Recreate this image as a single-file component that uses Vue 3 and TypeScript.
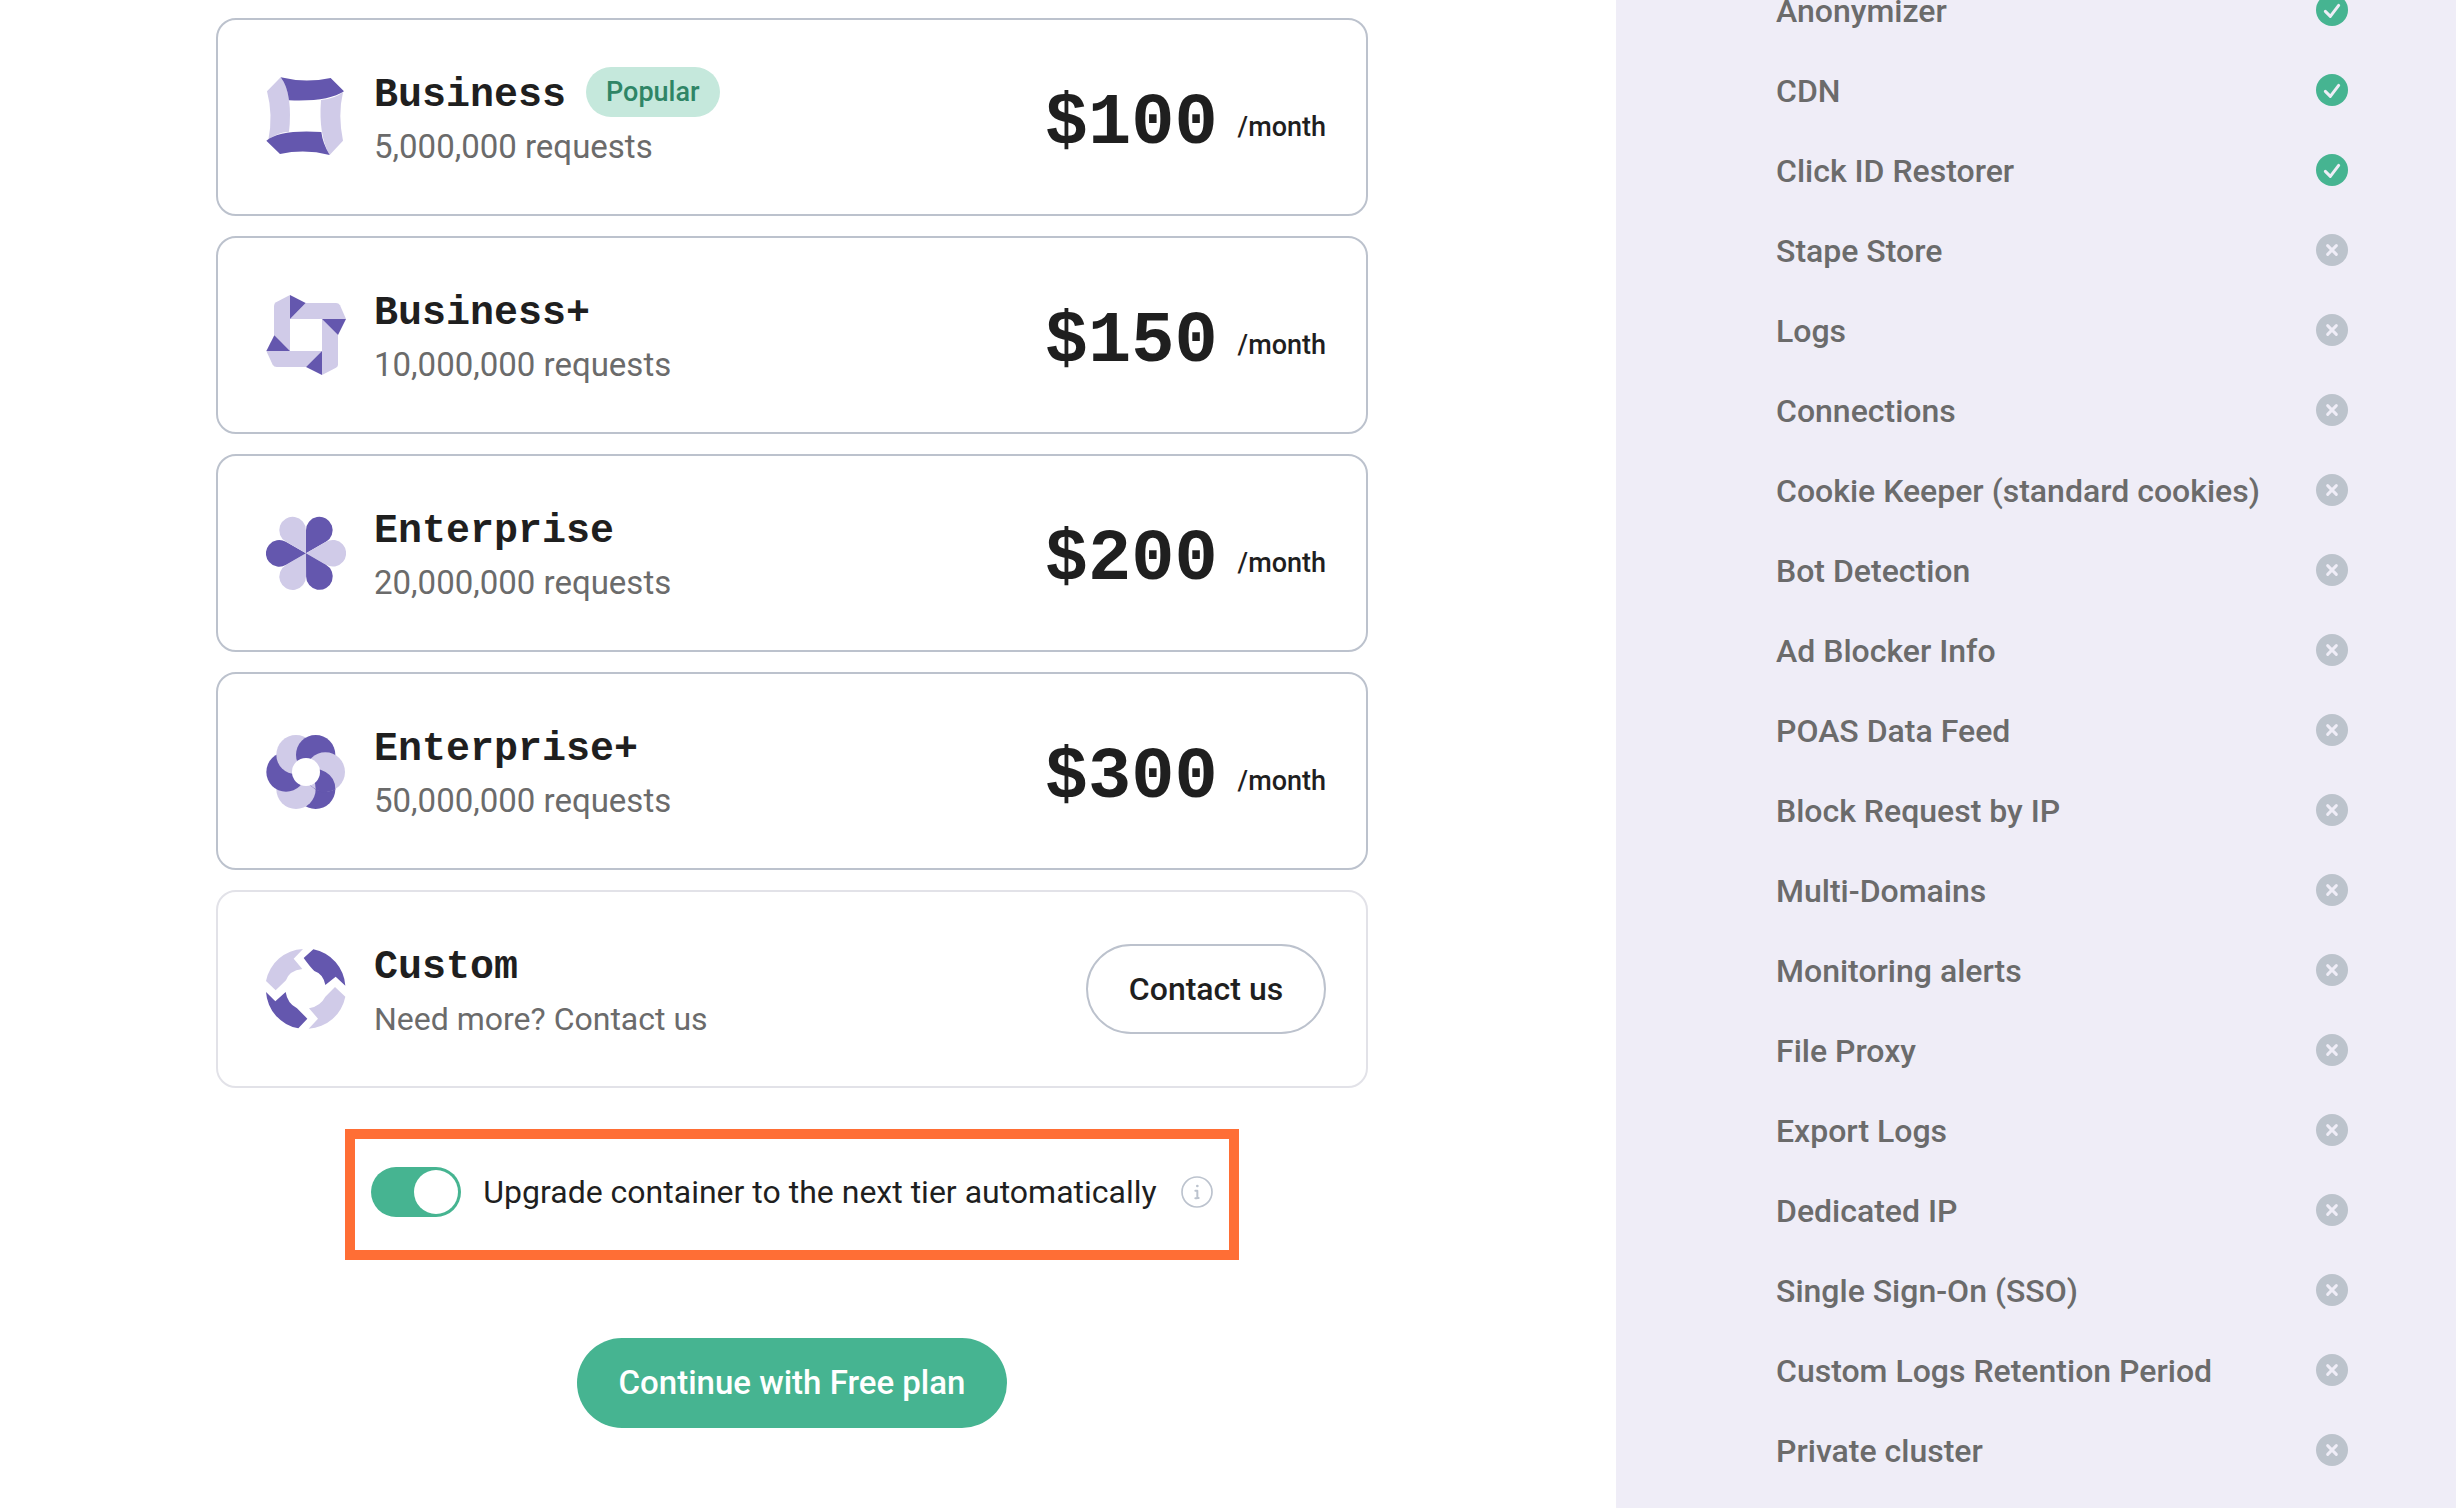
<script setup lang="ts">
import { ref } from 'vue'

interface Shape {
  d: string
  dark: boolean
  turn?: number
}

interface Plan {
  name: string
  note: string
  price?: string
  popular?: boolean
  viewBox: string
  shapes: Shape[]
  hole?: boolean
}

interface Feature {
  name: string
  included: boolean
}

const petal = 'M168 160V91A40 40 0 1 1 228 125Z'

const plans: Plan[] = [
  {
    name: 'Business',
    note: '5,000,000 requests',
    price: '$100',
    popular: true,
    viewBox: '48 51 240 240',
    shapes: [
      { dark: false, d: 'M92 52L51 94Q70 165 55 240Q80 217 117 215Q123 165 117 119Q112 78 92 52Z' },
      { dark: false, d: 'M279 97Q263 165 279 242L239 285Q205 225 213 120Q255 116 279 97Z' },
      { dark: true, d: 'M92 52Q165 70 242 54L282 94Q235 126 117 121Q112 78 92 52Z' },
      { dark: true, d: 'M49 242L90 282Q165 266 239 285Q218 250 214 216Q90 208 49 242Z' },
    ],
  },
  {
    name: 'Business+',
    note: '10,000,000 requests',
    price: '$150',
    viewBox: '48 45 240 240',
    shapes: [
      { dark: false, d: 'M120 45L78 67Q72 71 72 78V166L120 213Z' },
      { dark: false, d: 'M167 69H258Q266 69 270 76L288 117H120Z' },
      { dark: false, d: 'M216 117L264 165V254Q264 260 258 263L216 285Z' },
      { dark: false, d: 'M49 213H216L168 261H80Q72 261 68 254Z' },
      { dark: true, d: 'M120 45L167 69L120 117Z' },
      { dark: true, d: 'M288 117L264 165L216 117Z' },
      { dark: true, d: 'M216 213V285L168 261Z' },
      { dark: true, d: 'M49 213L73 166L120 213Z' },
    ],
  },
  {
    name: 'Enterprise',
    note: '20,000,000 requests',
    price: '$200',
    viewBox: '48 39 240 240',
    shapes: [0, 60, 120, 180, 240, 300].map((turn) => ({ d: petal, turn, dark: turn % 120 === 0 })),
  },
  {
    name: 'Enterprise+',
    note: '50,000,000 requests',
    price: '$300',
    viewBox: '48 48 240 240',
    hole: true,
    shapes: [
      { dark: true, d: 'M138 223a59 59 0 1 1 118 0a59 59 0 1 1 -118 0Z' },
      { dark: false, d: 'M79 223a59 59 0 1 1 118 0a59 59 0 1 1 -118 0Z' },
      { dark: true, d: 'M49 171a59 59 0 1 1 118 0a59 59 0 1 1 -118 0Z' },
      { dark: false, d: 'M79 119a59 59 0 1 1 118 0a59 59 0 1 1 -118 0Z' },
      { dark: true, d: 'M138 119a59 59 0 1 1 118 0a59 59 0 1 1 -118 0Z' },
      { dark: false, d: 'M167 171a59 59 0 1 1 118 0a59 59 0 1 1 -118 0Z' },
      { dark: true, d: 'M167 171A59 59 0 0 1 256 223A59 59 0 0 1 167 171Z' },
      { dark: false, d: 'M167 171A59 59 0 0 1 197 223A59 59 0 0 1 167 171Z' },
    ],
  },
  {
    name: 'Custom',
    note: 'Need more? Contact us',
    viewBox: '48 57 240 240',
    shapes: [
      { dark: false, d: 'M159 57A119 119 0 0 0 48 153L77 181L108 151Q117 122 157 117L131 86Z' },
      { dark: true, d: 'M190 58A119 119 0 0 1 286 167L257 140L226 165Q220 132 193 123Q182 113 161 84Z' },
      { dark: false, d: 'M286 200A119 119 0 0 1 176 296L204 266L177 235Q212 228 226 200L255 171Z' },
      { dark: true, d: 'M48 186A119 119 0 0 0 145 295L172 266L141 235Q112 220 107 186L76 214Z' },
    ],
  },
]

const features: Feature[] = [
  { name: 'Anonymizer', included: true },
  { name: 'CDN', included: true },
  { name: 'Click ID Restorer', included: true },
  { name: 'Stape Store', included: false },
  { name: 'Logs', included: false },
  { name: 'Connections', included: false },
  { name: 'Cookie Keeper (standard cookies)', included: false },
  { name: 'Bot Detection', included: false },
  { name: 'Ad Blocker Info', included: false },
  { name: 'POAS Data Feed', included: false },
  { name: 'Block Request by IP', included: false },
  { name: 'Multi-Domains', included: false },
  { name: 'Monitoring alerts', included: false },
  { name: 'File Proxy', included: false },
  { name: 'Export Logs', included: false },
  { name: 'Dedicated IP', included: false },
  { name: 'Single Sign-On (SSO)', included: false },
  { name: 'Custom Logs Retention Period', included: false },
  { name: 'Private cluster', included: false },
]

const autoUpgrade = ref(true)
</script>

<template>
  <div class="page">
    <main class="plans">
      <ul class="plan-list">
        <li v-for="plan in plans" :key="plan.name" class="plan" :class="{ 'plan-custom': !plan.price }">
          <svg class="plan-icon" :viewBox="plan.viewBox" aria-hidden="true">
            <path
              v-for="(shape, i) in plan.shapes"
              :key="i"
              :d="shape.d"
              :fill="shape.dark ? '#6457ae' : '#d0cbe8'"
              :transform="shape.turn ? `rotate(${shape.turn} 168 160)` : undefined"
            />
            <circle v-if="plan.hole" cx="168" cy="171" r="42" fill="#fff" />
          </svg>
          <div class="plan-info">
            <div class="plan-title">
              <h2 class="plan-name">{{ plan.name }}</h2>
              <span v-if="plan.popular" class="badge">Popular</span>
            </div>
            <p class="plan-note" :class="{ 'plan-note-count': plan.price }">{{ plan.note }}</p>
          </div>
          <p v-if="plan.price" class="cost">
            <strong class="price">{{ plan.price }}</strong>
            <span class="period">/month</span>
          </p>
          <button v-else type="button" class="button button-outline">Contact us</button>
        </li>
      </ul>

      <div class="upgrade">
        <input id="auto-upgrade" v-model="autoUpgrade" type="checkbox" role="switch" class="toggle" />
        <label for="auto-upgrade" class="upgrade-label">Upgrade container to the next tier automatically</label>
        <button type="button" class="info" aria-label="More information">
          <svg viewBox="0 0 96 96" fill="none" stroke="#bcc3ce" stroke-width="5" stroke-linecap="round" stroke-linejoin="round">
            <circle cx="48" cy="48" r="45" />
            <path d="M43 44H49V64Q49 67 53 66M43 67H48" stroke-width="6" />
            <circle cx="49" cy="30" r="4" fill="#bcc3ce" stroke="none" />
          </svg>
        </button>
      </div>

      <button type="button" class="button button-primary">Continue with Free plan</button>
    </main>

    <aside class="features">
      <ul class="feature-list">
        <li v-for="feature in features" :key="feature.name" class="feature">
          <span class="feature-name">{{ feature.name }}</span>
          <svg
            class="mark"
            viewBox="0 0 96 96"
            role="img"
            :aria-label="feature.included ? 'Included' : 'Not included'"
            fill="none"
            stroke="#efedf7"
            stroke-width="9"
            stroke-linecap="round"
            stroke-linejoin="round"
          >
            <circle cx="48" cy="48" r="48" stroke="none" :fill="feature.included ? '#46b491' : '#bcc3cc'" />
            <path v-if="feature.included" d="M28 52L43 67L68 34" />
            <path v-else d="M35 35L61 61M61 35L35 61" />
          </svg>
        </li>
      </ul>
    </aside>
  </div>
</template>

<style>
body {
  margin: 0;
  background: #fff;
}
</style>

<style scoped>
.page {
  display: flex;
  min-height: 100vh;
  color: #1f1f1f;
  font-family: Roboto, "Noto Sans", sans-serif;
  font-size: 32px;
  line-height: 48px;
}

.plans {
  display: flex;
  flex: 1;
  flex-direction: column;
  align-items: center;
  padding: 18px 248px 0 216px;
}

.plan-list,
.feature-list {
  margin: 0;
  padding: 0;
  list-style: none;
}

.plan-list {
  display: flex;
  flex-direction: column;
  gap: 20px;
  width: 100%;
}

.plan {
  display: flex;
  align-items: center;
  box-sizing: border-box;
  min-height: 198px;
  padding: 0 40px 0 48px;
  border: 2px solid #bcc2cd;
  border-radius: 20px;
}

.plan-custom {
  border-color: #e2e2e8;
}

.plan-icon {
  width: 80px;
  height: 80px;
  margin-right: 28px;
}

.plan-info {
  flex: 1;
  padding-top: 4px;
}

.plan-title {
  display: flex;
  align-items: center;
  gap: 20px;
  height: 50px;
}

.plan-name {
  margin: 0;
  padding-top: 8px;
  font-family: "Liberation Mono", monospace;
  font-size: 40px;
  font-weight: 700;
  line-height: 50px;
}

.badge {
  padding: 0 20px;
  border-radius: 25px;
  background: #c5e8dc;
  color: #2f8566;
  font-size: 27px;
  font-weight: 500;
  line-height: 50px;
}

.plan-note {
  margin: 6px 0 0;
  color: #6b6b6b;
}

.plan-note-count {
  font-size: 33px;
}

.cost {
  display: flex;
  align-items: center;
  gap: 20px;
  margin: 0;
}

.price {
  padding-top: 14px;
  font-family: "Liberation Mono", monospace;
  font-size: 72px;
  font-weight: 700;
  line-height: 80px;
}

.period {
  padding-top: 20px;
  font-size: 27px;
  font-weight: 500;
  line-height: 40px;
}

.button {
  min-width: 240px;
  height: 90px;
  padding: 0 40px;
  border: 2px solid transparent;
  border-radius: 45px;
  font: inherit;
  font-weight: 500;
  cursor: pointer;
}

.button-outline {
  border-color: #bcc2cd;
  background: #fff;
  color: #1f1f1f;
}

.button-primary {
  margin-top: 78px;
  background: #46b491;
  color: #fff;
  font-size: 33px;
}

.upgrade {
  display: flex;
  align-items: center;
  margin-top: 41px;
  padding: 28px 16px 33px;
  border: 10px solid #ff6e35;
}

.toggle {
  width: 90px;
  height: 50px;
  margin: 0;
  padding: 3px;
  box-sizing: border-box;
  border-radius: 25px;
  background: #bcc3cc;
  appearance: none;
  cursor: pointer;
}

.toggle::before {
  display: block;
  width: 44px;
  height: 44px;
  border-radius: 50%;
  background: #fff;
  content: "";
}

.toggle:checked {
  background: #46b491;
}

.toggle:checked::before {
  margin-left: auto;
}

.upgrade-label {
  margin: 0 24px 0 22px;
}

.info {
  width: 32px;
  height: 32px;
  padding: 0;
  border: 0;
  background: none;
}

.info svg {
  display: block;
}

.features {
  box-sizing: border-box;
  width: 840px;
  padding: 0 108px 0 160px;
  overflow: hidden;
  background: #efedf7;
  color: #6b6b6b;
  font-weight: 500;
}

/* The list is scrolled so that its first row is cut by the top edge. */
.feature-list {
  margin-top: -30px;
}

.feature {
  display: flex;
  align-items: center;
  justify-content: space-between;
  height: 80px;
}

.feature-name {
  padding-top: 2px;
}

.mark {
  width: 32px;
  height: 32px;
}
</style>
